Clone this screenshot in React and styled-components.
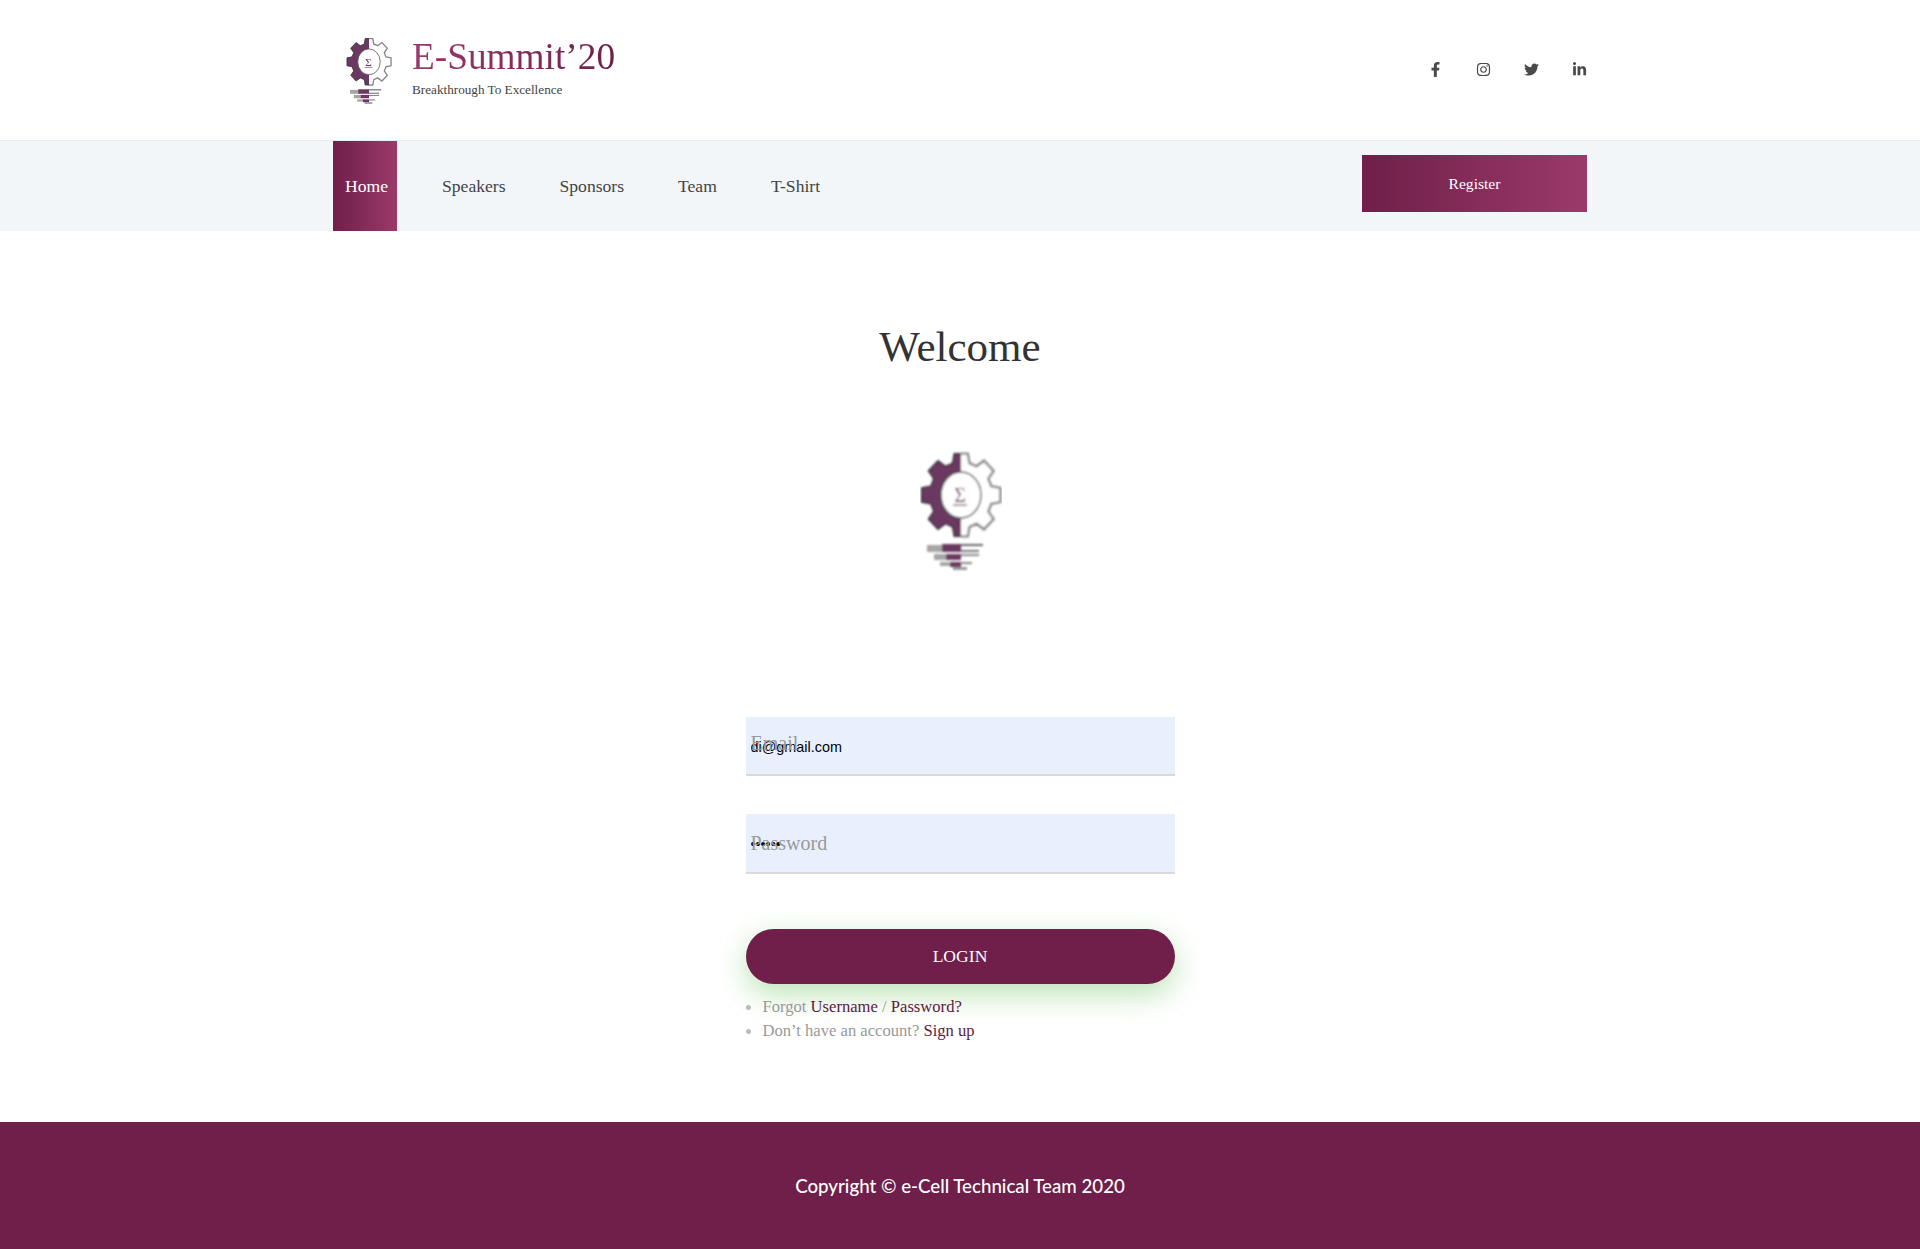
import React, { useId } from 'react';
import styled, { createGlobalStyle } from 'styled-components';
import { FaFacebookF, FaInstagram, FaTwitter, FaLinkedinIn } from 'react-icons/fa';

const GlobalStyle = createGlobalStyle`
  html, body {
    margin: 0;
    padding: 0;
    background: #fff;
    font-family: "Liberation Serif", "Times New Roman", serif;
  }
  * { box-sizing: border-box; }
`;

const Wrap = styled.div`
  width: 1254px;
  margin: 0 auto;
  display: flex;
  align-items: center;
  justify-content: space-between;
  height: 100%;
`;

const TopBar = styled.header`
  height: 141px;
  border-bottom: 1px solid #e9eef2;
`;

const Brand = styled.div`
  display: flex;
  align-items: center;
  gap: 20px;
  padding-left: 13px;
  margin-top: -2px;
`;

const BrandLogo = styled.div`
  margin-top: 4px;
`;

const BrandText = styled.div`
  display: flex;
  flex-direction: column;
  gap: 3px;
  margin-top: -4px;
`;

const Title = styled.div`
  font-size: 37.3px;
  line-height: 44px;
  background: linear-gradient(to right, #9b3a6a, #6f1f49);
  -webkit-background-clip: text;
  background-clip: text;
  color: transparent;
`;

const Tagline = styled.div`
  font-size: 13.2px;
  line-height: 16px;
  color: #444;
`;

const Social = styled.div`
  display: flex;
  align-items: center;
  gap: 33px;
  color: #4a4a4a;
  font-size: 15px;
  margin-top: -1px;

  svg { display: block; }
`;

const NavBar = styled.nav`
  height: 90px;
  background: #f2f6f9;
`;

const NavLinks = styled.div`
  display: flex;
  align-items: stretch;
  height: 90px;
`;

const NavLink = styled.a`
  display: flex;
  align-items: center;
  padding-top: 1px;
  font-size: 17.6px;
  padding-left: ${({ $active }) => ($active ? '12px' : '27px')};
  padding-right: ${({ $active }) => ($active ? '9px' : '27px')};
  color: ${({ $active }) => ($active ? '#fff' : '#444')};
  background: ${({ $active }) => ($active ? 'linear-gradient(to right, #6f1f49, #9b3a6a)' : 'none')};
  &:nth-child(2) { margin-left: 18px; }
`;

const RegisterButton = styled.a`
  width: 225px;
  height: 57px;
  margin-top: -5px;
  padding-top: 1px;
  display: flex;
  align-items: center;
  justify-content: center;
  color: #fff;
  font-size: 15.6px;
  background: linear-gradient(to right, #6f1f49, #9b3a6a);
`;

const Main = styled.main`
  display: flex;
  flex-direction: column;
  align-items: center;
  height: 891px;
  padding-top: 91px;
`;

const Heading = styled.h1`
  margin: 0;
  font-size: 43px;
  font-weight: 400;
  line-height: 50px;
  color: #333;
`;

const BigLogo = styled.div`
  margin-top: 77px;
  height: 268px;
  padding-left: 1px;
`;

const Form = styled.form`
  width: 429px;
  display: flex;
  flex-direction: column;
`;

const Field = styled.div`
  position: relative;
  height: ${({ $height }) => $height}px;
  margin-bottom: 38px;
  background: #e8f0fe;
  border-bottom: 2px solid #d9d9d9;
`;

const Input = styled.input`
  width: 100%;
  height: 100%;
  border: none;
  outline: none;
  padding: 2px 0 0 5px;
  background: transparent;
  font-family: "Liberation Sans", Arial, sans-serif;
  font-size: 14.4px;
  color: #000;
`;

const FloatLabel = styled.label`
  position: absolute;
  left: 5px;
  top: ${({ $top }) => $top}px;
  font-size: 20px;
  line-height: 22px;
  color: #999;
  pointer-events: none;
`;

const LoginButton = styled.button`
  height: 55px;
  margin-top: 17px;
  border: none;
  border-radius: 28px;
  background: #6f1f49;
  color: #fff;
  font-family: inherit;
  font-size: 17.6px;
  box-shadow: 0 10px 30px rgba(87, 184, 70, 0.4);
`;

const Links = styled.ul`
  list-style: none;
  margin: 11px 0 0;
  padding: 0;
`;

const LinkRow = styled.li`
  display: flex;
  align-items: center;
  height: 24px;
  font-size: 16.6px;
  color: #999;

  &::before {
    content: '';
    width: 5px;
    height: 5px;
    border-radius: 50%;
    background: #bbb;
    margin-right: 12px;
  }
`;

const RowText = styled.span`
  white-space: pre;
`;

const PlumLink = styled.a`
  color: #5f1a3e;
`;

const Footer = styled.footer`
  height: 127px;
  background: #6f1f49;
  display: flex;
  align-items: center;
  justify-content: center;
  color: #fff;
  font-family: Lato, "Noto Sans", sans-serif;
  font-size: 18.7px;
  font-weight: 500;
`;

// gear with 8 teeth, tooth on top
const gearPath = () => {
  const cx = 41;
  const cy = 46;
  const pts = [];
  for (let i = 0; i < 8; i++) {
    const a = (i * Math.PI) / 4 - Math.PI / 2;
    [[-0.27, 33], [-0.17, 42], [0.17, 42], [0.27, 33]].forEach(([d, r]) => {
      pts.push(`${(cx + Math.cos(a + d) * r * 0.95).toFixed(1)} ${(cy + Math.sin(a + d) * r).toFixed(1)}`);
    });
  }
  return `M${pts.join('L')}Z`;
};

function Logo({ width }) {
  const id = useId();
  const d = gearPath();
  return (
    <svg width={width} viewBox="0 0 82 124" style={{ display: 'block' }}>
      <defs>
        <clipPath id={`${id}l`}><rect x="0" y="0" width="41" height="124" /></clipPath>
        <clipPath id={`${id}r`}><rect x="41" y="0" width="41" height="124" /></clipPath>
        <filter id={`${id}b`}><feGaussianBlur stdDeviation="0.8" /></filter>
      </defs>
      <g filter={`url(#${id}b)`}>
        <path d={d} fill="#6b3760" stroke="#333" strokeWidth="1.4" clipPath={`url(#${id}l)`} />
        <path d={d} fill="#fff" stroke="#888" strokeWidth="2.4" clipPath={`url(#${id}r)`} />
        <ellipse cx="41" cy="46" rx="20" ry="23" fill="#fff" stroke="#555" strokeWidth="1.4" />
        <text x="40" y="53" textAnchor="middle" fontSize="20" fill="#6e3560" fontFamily="Liberation Serif">Σ</text>
        <rect x="33" y="55" width="14" height="2" fill="#999" />
        <rect x="7" y="96" width="18" height="7" fill="#a5a5a5" />
        <rect x="22" y="95" width="19" height="8" fill="#6b3760" />
        <rect x="41" y="95" width="22" height="2" fill="#666" />
        <rect x="41" y="101" width="18" height="2" fill="#777" />
        <rect x="14" y="105" width="12" height="6" fill="#a5a5a5" />
        <rect x="26" y="105" width="15" height="6" fill="#6b3760" />
        <rect x="41" y="105" width="18" height="2" fill="#888" />
        <rect x="20" y="113" width="10" height="4" fill="#a5a5a5" />
        <rect x="30" y="113" width="11" height="5" fill="#6b3760" />
        <rect x="41" y="113" width="11" height="2" fill="#888" />
        <rect x="33" y="118" width="14" height="3" fill="#999" />
      </g>
    </svg>
  );
}

export default function App() {
  return (
    <>
      <GlobalStyle />
      <TopBar>
        <Wrap>
          <Brand>
            <BrandLogo>
              <Logo width={46} />
            </BrandLogo>
            <BrandText>
              <Title>E-Summit’20</Title>
              <Tagline>Breakthrough To Excellence</Tagline>
            </BrandText>
          </Brand>
          <Social>
            <FaFacebookF />
            <FaInstagram />
            <FaTwitter />
            <FaLinkedinIn />
          </Social>
        </Wrap>
      </TopBar>
      <NavBar>
        <Wrap>
          <NavLinks>
            <NavLink $active>Home</NavLink>
            <NavLink>Speakers</NavLink>
            <NavLink>Sponsors</NavLink>
            <NavLink>Team</NavLink>
            <NavLink>T-Shirt</NavLink>
          </NavLinks>
          <RegisterButton>Register</RegisterButton>
        </Wrap>
      </NavBar>
      <Main>
        <Heading>Welcome</Heading>
        <BigLogo>
          <Logo width={82} />
        </BigLogo>
        <Form onSubmit={(e) => e.preventDefault()}>
          <Field $height={59}>
            <Input type="text" defaultValue="di@gmail.com" />
            <FloatLabel $top={15}>Email</FloatLabel>
          </Field>
          <Field $height={60}>
            <Input type="password" defaultValue="secret" />
            <FloatLabel $top={18}>Password</FloatLabel>
          </Field>
          <LoginButton type="submit">LOGIN</LoginButton>
          <Links>
            <LinkRow>
              <RowText>Forgot <PlumLink>Username</PlumLink> / <PlumLink>Password?</PlumLink></RowText>
            </LinkRow>
            <LinkRow>
              <RowText>Don’t have an account? <PlumLink>Sign up</PlumLink></RowText>
            </LinkRow>
          </Links>
        </Form>
      </Main>
      <Footer>Copyright © e-Cell Technical Team 2020</Footer>
    </>
  );
}
